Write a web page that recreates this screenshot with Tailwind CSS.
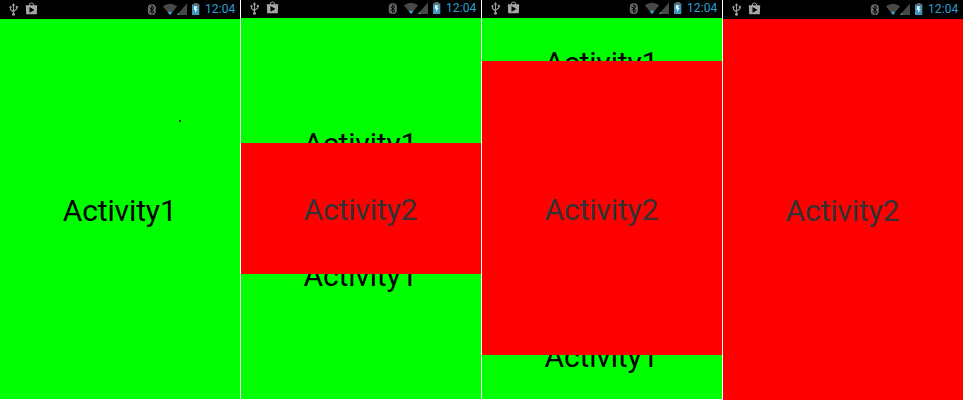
<!DOCTYPE html>
<html lang="en"><head><meta charset="utf-8"><title>Activity transition</title>
<script src="https://cdn.jsdelivr.net/npm/@tailwindcss/browser@4"></script></head>
<body class="bg-white overflow-hidden">
<svg class="hidden"><defs>
<g id="status">
 <g fill="none" stroke="#a0a0a0" stroke-width="1.1"><path d="M13.5 4.5V14M10.5 7V9.5L13.5 12M16.8 6.5V9L13.5 11.3"/></g>
 <g fill="#a0a0a0"><path d="M13.5 3L15.2 5.8H11.8z"/><circle cx="10.5" cy="7.2" r="1.1"/><rect x="15.8" y="5.9" width="2" height="2"/><circle cx="13.5" cy="14.2" r="1.5"/></g>
 <path d="M29.3 6V5Q29.3 3 31.5 3T33.7 5V6" fill="none" stroke="#a0a0a0"/>
 <path d="M25.8 5.3H37.2L36.8 14.2H26.2z" fill="#a6a6a6"/><path d="M29.5 7L34.5 9.9L29.5 12.8z" fill="#000"/>
 <rect x="147.8" y="4.3" width="8" height="10.8" rx="3.6" fill="#686868"/>
 <path d="M149.5 7.5L154 11.8L151.8 13.8V5.7L154 7.7L149.5 12" fill="none" stroke="#000" stroke-width="1"/>
 <path d="M162.8 6.3Q170 1.3 177.2 6.3L170 15z" fill="#484848"/>
 <path d="M167.8 12.4Q170 10.8 172.2 12.4L170 15z" fill="#33a2cc"/>
 <path d="M187 3.5V15H177z" fill="#484848"/><path d="M179.2 12.6V15H177z" fill="#33a2cc"/>
 <path d="M194 3.2H197.5V4.6H199.3V15H192V4.6H194z" fill="#4295b8"/>
 <path d="M194 3.2H197.5V4.6H199.3V5.4H192V4.6H194z" fill="#666"/>
 <path d="M194.2 6.3L193.8 9.8H195.2L195 13L197.6 9H196.2L197 6.3z" fill="#e8f6fb"/>
</g></defs></svg>
<main class="flex gap-px w-[963px] h-[400px] font-['Roboto',sans-serif] text-[30px] leading-[40px] tracking-[-0.14px] text-black">
 <section class="w-[240px] h-[399px] flex flex-col">
  <header class="h-[19px] bg-black flex shrink-0"><svg width="205" height="19" class="shrink-0"><use href="#status"/></svg><span class="text-[12px] leading-[19px] tracking-[0.1px] text-[#33b5e5]/90">12:04</span></header>
  <div class="flex-1 bg-[#00ff00] pl-[62.8px] pt-[172px] relative">Activity1<i class="absolute left-[179px] top-[101px] w-[2px] h-[2px] bg-[#003b00]"></i></div>
 </section>
 <section class="w-[240px] h-[399px] flex flex-col">
  <header class="h-[18px] bg-black flex shrink-0 overflow-hidden"><svg width="205" height="18" viewBox="0 1 205 18" class="shrink-0"><use href="#status"/></svg><span class="text-[12px] leading-[17px] tracking-[0.1px] text-[#33b5e5]/90">12:04</span></header>
  <div class="h-[125px] shrink-0 bg-[#00ff00] pl-[62.5px] pt-[106px] overflow-hidden">Activity1</div>
  <div class="h-[131px] shrink-0 bg-[#ff0000] pl-[62.5px] pt-[47px] text-[#333]">Activity2</div>
  <div class="flex-1 bg-[#00ff00] pl-[62.5px] overflow-hidden"><div class="-mt-[18px]">Activity1</div></div>
 </section>
 <section class="w-[240px] h-[399px] flex flex-col">
  <header class="h-[18px] bg-black flex shrink-0 overflow-hidden"><svg width="205" height="18" viewBox="0 1 205 18" class="shrink-0"><use href="#status"/></svg><span class="text-[12px] leading-[17px] tracking-[0.1px] text-[#33b5e5]/90">12:04</span></header>
  <div class="h-[43px] shrink-0 bg-[#00ff00] pl-[62.5px] pt-[25px] overflow-hidden">Activity1</div>
  <div class="h-[294px] shrink-0 bg-[#ff0000] pl-[62.5px] pt-[129px] text-[#333]">Activity2</div>
  <div class="flex-1 bg-[#00ff00] pl-[62.5px] overflow-hidden"><div class="-mt-[18px]">Activity1</div></div>
 </section>
 <section class="w-[240px] h-[400px] flex flex-col">
  <header class="h-[19px] bg-black flex shrink-0"><svg width="205" height="19" class="shrink-0"><use href="#status"/></svg><span class="text-[12px] leading-[19px] tracking-[0.1px] text-[#33b5e5]/90">12:04</span></header>
  <div class="flex-1 bg-[#ff0000] pl-[62.5px] pt-[172px] text-[#333]">Activity2</div>
 </section>
</main></body></html>
